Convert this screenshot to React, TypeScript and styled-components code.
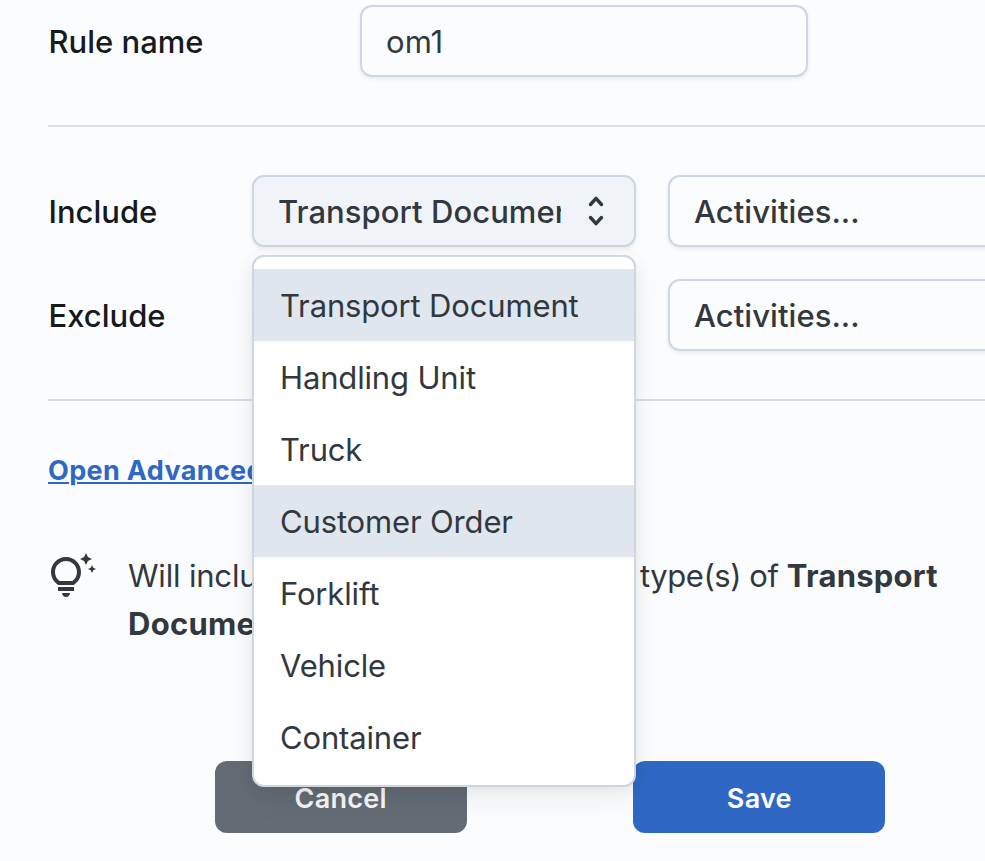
import React, { useState } from "react";
import styled, { createGlobalStyle, css } from "styled-components";
import { MdOutlineTipsAndUpdates } from "react-icons/md";

const GlobalStyle = createGlobalStyle`
  *, *::before, *::after { box-sizing: border-box; }
  body {
    margin: 0;
    overflow: hidden;
    background: #fbfcfe;
    color: #32383e;
    font-family: Inter, "Liberation Sans", sans-serif;
    font-size: 31px;
    letter-spacing: -0.15px;
    line-height: 48px;
  }
`;

const Form = styled.main`
  width: 1052px;
  height: 861px;
  padding: 5px 0 0 48px;
  display: flex;
  flex-direction: column;
`;

const NameRow = styled.div`
  display: grid;
  grid-template-columns: 312px 448px;
  align-items: center;
`;

const FilterRow = styled.div`
  display: grid;
  grid-template-columns: 204px 384px 384px;
  align-items: center;
  & > :nth-child(3) { margin-left: 32px; }
`;

const Filters = styled.section`
  display: flex;
  flex-direction: column;
  gap: 32px;
`;

const Label = styled.label`
  padding: 2px 0 0 0.5px;
  color: #171a1c;
  font-weight: 500;
  letter-spacing: 0;
`;

const Divider = styled.hr`
  width: 100%;
  height: 2px;
  margin: 48px 0;
  border: 0;
  background: #dddfe2;
  flex: none;
`;

const field = css`
  height: 72px;
  border: 2px solid #cdd7e1;
  border-radius: 12px;
  background: #fbfcfe;
  box-shadow: 0 2px 4px rgba(21, 21, 21, 0.08);
  font: inherit;
  letter-spacing: 0.05px;
  color: #32383e;
`;

const NameInput = styled.input`
  ${field}
  width: 448px;
  padding: 0 24px;
  outline: none;
`;

const SelectWrap = styled.div`
  position: relative;
`;

const SelectButton = styled.button<{ $open?: boolean }>`
  ${field}
  width: 384px;
  padding: 2px 24px 0;
  display: flex;
  align-items: center;
  justify-content: space-between;
  font-weight: 500;
  text-align: left;
  ${(p) => p.$open && "background: #f0f4f8;"}
`;

const SelectValue = styled.span`
  width: 283px;
  overflow: hidden;
  white-space: nowrap;
`;

const SortIcon = styled.svg`
  width: 24px;
  height: 36px;
  margin: -2px 2px 0 0;
  fill: none;
  stroke: #32383e;
  stroke-width: 3.4;
  stroke-linecap: round;
  stroke-linejoin: round;
`;

const Listbox = styled.ul`
  position: absolute;
  z-index: 2;
  top: 80px;
  left: 0;
  width: 384px;
  height: 532px;
  margin: 0;
  padding: 12px 0;
  list-style: none;
  background: #fff;
  border: 2px solid #cdd7e1;
  border-radius: 12px;
  box-shadow: 0 4px 16px rgba(21, 21, 21, 0.06), 0 12px 32px rgba(21, 21, 21, 0.05);
`;

const Option = styled.li<{ $active: boolean }>`
  height: 72px;
  padding: 13px 26px 11px;
  white-space: nowrap;
  background: ${(p) => (p.$active ? "#dfe6ed" : "transparent")};
`;

const AdvancedLink = styled.a`
  align-self: flex-start;
  margin: 1px 0 -1px;
  color: #2f68c4;
  font-size: 27px;
  font-weight: 700;
  letter-spacing: 0.35px;
  line-height: 42px;
  text-decoration: underline;
  text-decoration-thickness: 2px;
  text-underline-offset: 2px;
`;

const Hint = styled.div`
  display: flex;
  gap: 32px;
  margin-top: 61px;
  & > svg { flex: none; width: 48px; height: 48px; margin-top: 1px; }
`;

const HintText = styled.p`
  margin: 0;
  letter-spacing: -0.45px;
  b { font-weight: 700; letter-spacing: 0.25px; }
`;

const HintLead = styled.span`
  display: inline-block;
  width: 512px;
  letter-spacing: -0.18px;
  white-space: nowrap;
`;

const Actions = styled.footer`
  display: flex;
  justify-content: space-evenly;
  margin-top: 113px;
`;

const ActionButton = styled.button<{ $primary?: boolean }>`
  width: 252px;
  height: 72px;
  padding: 4px 0 0;
  border: 0;
  border-radius: 12px;
  color: ${(p) => (p.$primary ? "#fff" : "#f5f5f5")};
  background: ${(p) => (p.$primary ? "#2f68c4" : "#636b74")};
  font: 600 27px/42px Inter, "Liberation Sans", sans-serif;
  letter-spacing: 0.25px;
`;

const objectTypes = [
  "Transport Document",
  "Handling Unit",
  "Truck",
  "Customer Order",
  "Forklift",
  "Vehicle",
  "Container",
];

export default function App() {
  const [name, setName] = useState("om1");
  const [selected, setSelected] = useState(objectTypes[0]);
  const [hovered, setHovered] = useState("Customer Order");

  return (
    <>
      <GlobalStyle />
      <Form>
        <NameRow>
          <Label htmlFor="rule-name">Rule name</Label>
          <NameInput id="rule-name" value={name} onChange={(e) => setName(e.target.value)} />
        </NameRow>
        <Divider />
        <Filters>
          <FilterRow>
            <Label>Include</Label>
            <SelectWrap>
              <SelectButton $open>
                <SelectValue>{selected}</SelectValue>
                <SortIcon viewBox="0 0 24 36">
                  <path d="M6.5 11.5 12 5.3l5.5 6.2M6.5 24.5l5.5 6.2 5.5-6.2" />
                </SortIcon>
              </SelectButton>
              <Listbox role="listbox">
                {objectTypes.map((type) => (
                  <Option
                    key={type}
                    role="option"
                    $active={type === selected || type === hovered}
                    onMouseEnter={() => setHovered(type)}
                    onClick={() => setSelected(type)}
                  >
                    {type}
                  </Option>
                ))}
              </Listbox>
            </SelectWrap>
            <SelectButton>Activities...</SelectButton>
          </FilterRow>
          <FilterRow>
            <Label>Exclude</Label>
            <span />
            <SelectButton>Activities...</SelectButton>
          </FilterRow>
        </Filters>
        <Divider />
        <AdvancedLink>Open Advanced</AdvancedLink>
        <Hint>
          <MdOutlineTipsAndUpdates />
          <HintText>
            <HintLead>Will include</HintLead>
            type(s) of <b>Transport Document</b>
          </HintText>
        </Hint>
        <Actions>
          <ActionButton>Cancel</ActionButton>
          <ActionButton $primary>Save</ActionButton>
        </Actions>
      </Form>
    </>
  );
}
